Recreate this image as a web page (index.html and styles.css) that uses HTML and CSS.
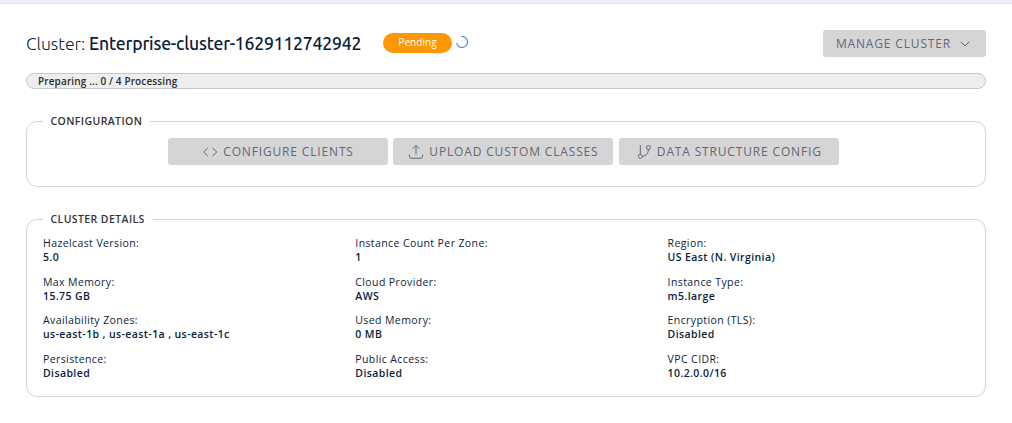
FILE: index.html
```html
<!DOCTYPE html>
<html lang="en">
<head>
<meta charset="utf-8">
<title>Cluster</title>
<link rel="stylesheet" href="styles.css">
</head>
<body>
<div class="topbar"></div>
<main class="page">
  <header class="head">
    <h1 class="title"><span class="title-label">Cluster:</span> <span class="title-name">Enterprise-cluster-1629112742942</span></h1>
    <span class="badge">Pending</span>
    <svg class="spinner" viewBox="0 0 14 14"><path d="M6.500 1.500A5.500 5.500 0 1 1 1.600 8"/></svg>
    <button class="btn btn-manage"><span>MANAGE CLUSTER</span><svg class="chevron" viewBox="0 0 10 6"><path d="M.8.8 5 5 9.200.8"/></svg></button>
  </header>
  <div class="progress">Preparing ... 0 / 4 Processing</div>
  <fieldset class="panel panel-config">
    <legend class="legend">CONFIGURATION</legend>
    <div class="actions">
      <button class="btn btn-clients"><svg class="icon" viewBox="0 0 16 16"><path d="M5.800 4 1.700 8l4.100 4M10.700 4l4.100 4-4.100 4"/></svg><span>CONFIGURE CLIENTS</span></button>
      <button class="btn btn-upload"><svg class="icon" viewBox="0 0 16 16"><path d="M8 10.500V1.500M4.800 4.600 8 1.300l3.200 3.300M1.500 10.500v2.200q0 1.500 1.500 1.500h10q1.500 0 1.500-1.500v-2.200"/></svg><span>UPLOAD CUSTOM CLASSES</span></button>
      <button class="btn btn-data"><svg class="icon" viewBox="0 0 16 16"><path d="M4.300 1.200v9.200M6.400 12.200c3.900-.2 5.800-2.800 6-6.600"/><circle cx="4.300" cy="12.400" r="2"/><circle cx="12.400" cy="3.600" r="2"/></svg><span>DATA STRUCTURE CONFIG</span></button>
    </div>
  </fieldset>
  <fieldset class="panel panel-details">
    <legend class="legend">CLUSTER DETAILS</legend>
    <dl class="details">
      <div class="item"><dt>Hazelcast Version:</dt><dd>5.0</dd></div>
      <div class="item"><dt>Instance Count Per Zone:</dt><dd>1</dd></div>
      <div class="item"><dt>Region:</dt><dd>US East (N. Virginia)</dd></div>
      <div class="item"><dt>Max Memory:</dt><dd>15.75 GB</dd></div>
      <div class="item"><dt>Cloud Provider:</dt><dd>AWS</dd></div>
      <div class="item"><dt>Instance Type:</dt><dd>m5.large</dd></div>
      <div class="item"><dt>Availability Zones:</dt><dd>us-east-1b , us-east-1a , us-east-1c</dd></div>
      <div class="item"><dt>Used Memory:</dt><dd>0 MB</dd></div>
      <div class="item"><dt>Encryption (TLS):</dt><dd>Disabled</dd></div>
      <div class="item"><dt>Persistence:</dt><dd>Disabled</dd></div>
      <div class="item"><dt>Public Access:</dt><dd>Disabled</dd></div>
      <div class="item"><dt>VPC CIDR:</dt><dd>10.2.0.0/16</dd></div>
    </dl>
  </fieldset>
</main>
</body>
</html>
```
FILE: styles.css
```css
* { box-sizing: border-box; }
body { margin: 0; background: #fff; color: #0b1d3a; font-family: "Open Sans", sans-serif; overflow: hidden; }
.topbar { height: 4px; background: #ecf0f8; border-bottom: 1px solid #dfe2e8; }
.page { padding: 26px 26px 0; }
.head { display: flex; align-items: center; height: 27px; }
.title { margin: 0; width: 357px; font-family: Ubuntu, "Noto Sans", sans-serif; font-size: 17.6px; line-height: 27px; font-weight: 400; white-space: nowrap; }
.title-label { font-weight: 300; letter-spacing: -0.08px; }
.title-name { font-weight: 500; letter-spacing: -0.21px; }
.badge { width: 69px; height: 20px; margin-top: -1px; border-radius: 10px; background: #ff9800; color: #fff; font-size: 10px; line-height: 19px; letter-spacing: .05px; text-align: center; }
.spinner { width: 14px; height: 14px; margin: -3px 0 0 3px; fill: none; stroke: #5279cf; stroke-width: 1.1; }
.btn { display: flex; align-items: center; justify-content: center; height: 27px; padding: 0; border: 0; border-radius: 3px; background: #d5d5d5; color: #646779; font: 400 12px/27px "Open Sans", sans-serif; letter-spacing: .84px; white-space: nowrap; }
.btn svg { fill: none; stroke: currentColor; }
.btn-manage { width: 163px; margin-left: auto; padding-right: 3px; }
.chevron { width: 10px; height: 6px; margin-left: 9px; }
.icon { width: 16px; height: 16px; margin-right: 5px; }
.progress { height: 16px; margin-top: 16px; padding-left: 11px; border: 1px solid #c8c8c8; border-radius: 8px; background: #eee; color: #2b2b2b; font-size: 10px; font-weight: 600; line-height: 15px; letter-spacing: .13px; }
.panel { margin: 0; padding: 0 16px; border: 1px solid #d1d3da; border-radius: 11px; min-width: 0; }
.panel-config { height: 74px; margin-top: 24px; }
.panel-details { height: 186px; margin-top: 24px; }
.legend { padding: 0 8px 0 7.500px; color: #333; font-size: 10.5px; font-weight: 600; line-height: 16px; letter-spacing: .4px; }
.actions { display: grid; grid-template-columns: 220px 220px 220px; column-gap: 5.400px; justify-content: center; padding: 9px 5.200px 0 0; }
.details { display: grid; grid-template-columns: repeat(3, 312.300px); grid-auto-rows: 38.600px; margin: 0; padding-top: 9px; font-size: 10.5px; line-height: 14px; letter-spacing: .4px; white-space: nowrap; }
.details dd { margin: 0; font-weight: 600; }
```
